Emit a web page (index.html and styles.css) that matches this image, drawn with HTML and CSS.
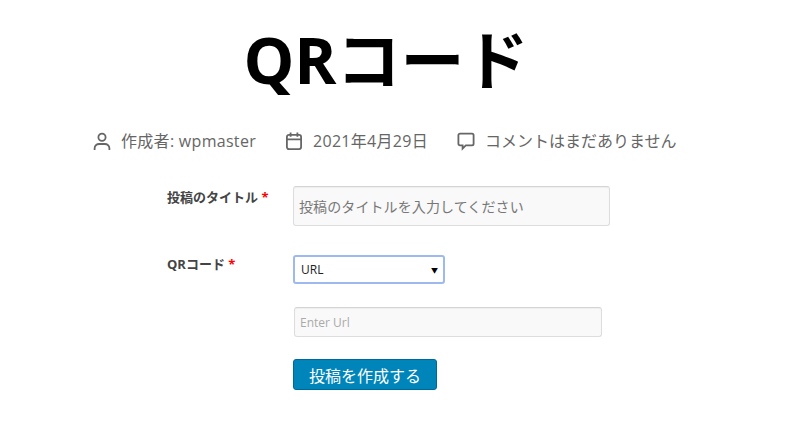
FILE: index.html
```html
<!DOCTYPE html>
<html lang="ja">
<head>
    <meta charset="UTF-8">
    <title>QRコード</title>
    <link rel="stylesheet" href="styles.css">
</head>
<body>
    <div class="container">
        <h1>QRコード</h1>

        <div class="meta">
            <span class="meta-item spaced">
                <svg width="20" height="20" viewBox="0 0 20 20" fill="none" stroke="#666" stroke-width="1.8">
                    <circle cx="10" cy="6.2" r="3.6"/>
                    <path d="M2.6 19v-1.6c0-2.6 2-4.4 4.6-4.4h5.6c2.6 0 4.6 1.8 4.6 4.400V19"/>
                </svg>
                作成者: wpmaster
            </span>
            <span class="meta-item spaced">
                <svg width="20" height="20" viewBox="0 0 20 20" fill="none" stroke="#666" stroke-width="1.8">
                    <rect x="2.9" y="3.9" width="14.2" height="14.2" rx="2"/>
                    <path d="M2.9 8.4h14.2M6.6 1.4v4.4M13.4 1.4v4.4"/>
                </svg>
                2021年4月29日
            </span>
            <span class="meta-item">
                <svg width="20" height="20" viewBox="0 0 20 20" fill="none" stroke="#666" stroke-width="1.8">
                    <path d="M4 2.6h12c1 0 1.6.7 1.6 1.6v8.6c0 1-.7 1.6-1.6 1.6h-6.2l-3.2 3.2v-3.2H4c-1 0-1.6-.7-1.6-1.6V4.200c0-.9.7-1.600 1.600-1.600z"/>
                </svg>
                コメントはまだありません
            </span>
        </div>

        <form class="post-form">
            <div class="form-row row-title">
                <label>投稿のタイトル <span class="required">*</span></label>
                <input type="text" class="title-input" placeholder="投稿のタイトルを入力してください">
            </div>
            <div class="form-row row-type">
                <label>QRコード <span class="required">*</span></label>
                <div class="fake-select">URL<span class="arrow">▼</span></div>
            </div>
            <div class="form-row row-url">
                <span></span>
                <input type="text" class="url-input" placeholder="Enter Url">
            </div>
            <div class="form-row">
                <span></span>
                <div><button type="button">投稿を作成する</button></div>
            </div>
        </form>
    </div>
</body>
</html>
```

FILE: styles.css
```css
body {
    margin: 0;
    background-color: #fff;
    color: #666;
    font-family: "Open Sans", "Noto Sans CJK JP", sans-serif;
    overflow: hidden;
}
.container {
    width: 772px;
}
h1 {
    margin: 0;
    padding-top: 17px;
    text-align: center;
    font-size: 64px;
    line-height: 86px;
    font-weight: 700;
    color: #000;
}
.meta {
    display: flex;
    gap: 28px;
    margin-top: 25px;
    padding-left: 92px;
    font-size: 16px;
    line-height: 26px;
}
.meta-item {
    display: flex;
    align-items: center;
    gap: 9px;
}
.spaced {
    letter-spacing: 0.3px;
}
.post-form {
    margin-top: 32px;
    padding-left: 167px;
}
.form-row {
    display: grid;
    grid-template-columns: 126px 1fr;
    align-items: start;
}
label {
    font-size: 13px;
    font-weight: 700;
    line-height: 22px;
    color: #444;
}
.required {
    color: #f00;
}
input {
    display: block;
    box-sizing: border-box;
    border: 1px solid #ddd;
    border-top-color: #d4d4d4;
    border-radius: 3px;
    background-color: #f9f9f9;
    box-shadow: inset 0 1px 1px #eee;
    font-family: inherit;
    padding: 0 5px;
}
.title-input {
    width: 317px;
    height: 40px;
    font-size: 14px;
    letter-spacing: 0.1px;
}
.title-input::placeholder {
    color: #777;
}
.url-input {
    width: 308px;
    height: 30px;
    margin-left: 1px;
    font-size: 12px;
}
.url-input::placeholder {
    color: #aaa;
}
.row-title {
    height: 69px;
}
.row-type {
    height: 52px;
}
.row-type label {
    margin-top: -2px;
}
.row-url {
    height: 52px;
}
.fake-select {
    display: flex;
    justify-content: space-between;
    align-items: center;
    box-sizing: border-box;
    width: 152px;
    height: 29px;
    padding: 0 5px 0 6px;
    border: 2px solid #9db9f0;
    border-radius: 3px;
    font-size: 12px;
    color: #222;
}
.arrow {
    font-size: 7px;
    color: #000;
}
button {
    display: block;
    box-sizing: border-box;
    width: 144px;
    height: 31px;
    border: 1px solid #006799;
    border-radius: 3px;
    background-color: #0085ba;
    color: #fff;
    font-family: inherit;
    font-size: 16px;
    cursor: pointer;
}
```
